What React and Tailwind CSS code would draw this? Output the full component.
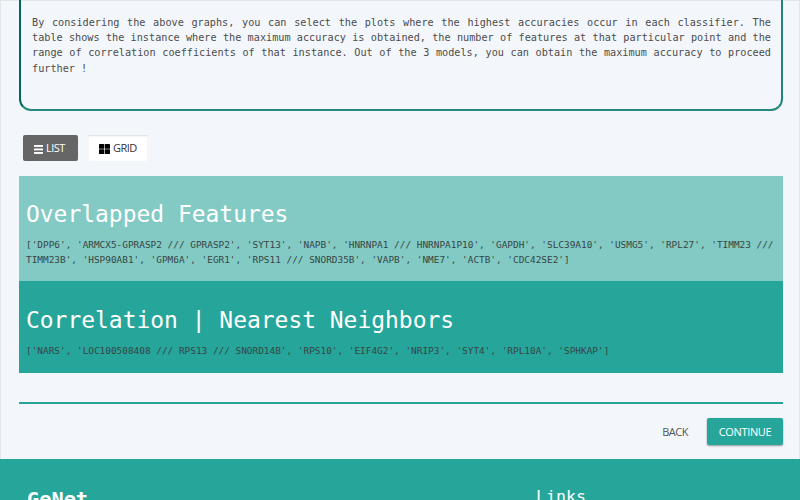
const mono = "font-['DejaVu_Sans_Mono','Liberation_Mono',monospace]";
const sans = "font-['Open_Sans','Noto_Sans',sans-serif]";

function Intro() {
  return (
    <section className="h-[111px] w-[764px] rounded-b-[12px] border-2 border-t-0 border-b-[#26877e] border-l-[#00695c] border-r-[#1f857b] pt-[14.5px] pl-[11px] pr-[10px] text-[10.2px] leading-[15.35px] text-[#4c4c4c]">
      <p className="w-[739px]">
        <span className="block [text-align-last:justify]">
          By considering the above graphs, you can select the plots where the highest accuracies occur in each classifier. The
        </span>
        <span className="block [text-align-last:justify]">
          table shows the instance where the maximum accuracy is obtained, the number of features at that particular point and the
        </span>
        <span className="block [text-align-last:justify]">
          range of correlation coefficients of that instance. Out of the 3 models, you can obtain the maximum accuracy to proceed
        </span>
        <span className="block">further !</span>
      </p>
    </section>
  );
}

function ViewToggle() {
  return (
    <div className={`${sans} mt-[24px] ml-[4px] flex h-[26px] gap-[10px] text-[11px] tracking-[-0.5px]`}>
      <button className="flex w-[55px] items-center rounded-[2px] bg-[#666] pl-[11px] pt-[1px] text-white">
        <svg className="mr-[3px] mt-[1px] h-[9px] w-[9px] shrink-0" viewBox="0 0 9 9" fill="currentColor">
          <rect y="0" width="9" height="1.9" />
          <rect y="3.5" width="9" height="1.9" />
          <rect y="7" width="9" height="1.9" />
        </svg>
        LIST
      </button>
      <button className="flex w-[60px] items-center bg-white pl-[11px] pt-[1px] text-[#333] shadow-[inset_0_1px_2px_#ddd]">
        <svg className="mr-[3px] h-[10px] w-[11px] shrink-0" viewBox="0 0 11 10" fill="#000">
          <rect width="5.2" height="4.7" rx="0.5" />
          <rect x="5.8" width="5.2" height="4.7" rx="0.5" />
          <rect y="5.3" width="5.2" height="4.7" rx="0.5" />
          <rect x="5.8" y="5.3" width="5.2" height="4.7" rx="0.5" />
        </svg>
        GRID
      </button>
    </div>
  );
}

function FeatureList({ title, lines, className }) {
  return (
    <section className={`pl-[7px] text-[#364545] ${className}`}>
      <h2 className="text-[22.95px] leading-[28px] text-white">{title}</h2>
      <div className="mt-[9px] text-[9.42px] leading-[15px]">
        {lines.map((line) => (
          <p key={line} className="whitespace-nowrap">{line}</p>
        ))}
      </div>
    </section>
  );
}

export default function App() {
  return (
    <div className={`${mono} flex h-[500px] w-[800px] flex-col overflow-hidden bg-[#f3f7fb] shadow-[inset_0_0_0_1px_#e3e6e9]`}>
      <main className="h-[459px] shrink-0 pl-[19px]">
        <Intro />
        <ViewToggle />
        <div className="mt-[15px] w-[764px]">
          <FeatureList
            title="Overlapped Features"
            className="h-[105px] bg-[#82cac3] pt-[24px]"
            lines={[
              "['DPP6', 'ARMCX5-GPRASP2 /// GPRASP2', 'SYT13', 'NAPB', 'HNRNPA1 /// HNRNPA1P10', 'GAPDH', 'SLC39A10', 'USMG5', 'RPL27', 'TIMM23 ///",
              "TIMM23B', 'HSP90AB1', 'GPM6A', 'EGR1', 'RPS11 /// SNORD35B', 'VAPB', 'NME7', 'ACTB', 'CDC42SE2']",
            ]}
          />
          <FeatureList
            title="Correlation | Nearest Neighbors"
            className="h-[92px] bg-[#26a69a] pt-[25px]"
            lines={[
              "['NARS', 'LOC100508408 /// RPS13 /// SNORD14B', 'RPS10', 'EIF4G2', 'NRIP3', 'SYT4', 'RPL10A', 'SPHKAP']",
            ]}
          />
        </div>
        <hr className="mt-[29px] w-[764px] border-0 border-t-2 border-[#26a69a]" />
        <div className={`${sans} mt-[14px] flex h-[27px] w-[764px] items-center justify-end text-[11px] tracking-[-0.5px]`}>
          <button className="mr-[19px] pt-[1px] text-[#555]">BACK</button>
          <button className="h-[27px] w-[76px] rounded-[2px] bg-[#26a69a] pt-[1px] tracking-[-0.35px] text-white shadow-[0_1px_2px_rgba(0,0,0,0.4)]">CONTINUE</button>
        </div>
      </main>
      <footer className="flex h-[41px] shrink-0 overflow-hidden bg-[#26a69a] text-white">
        <h3 className="w-[510px] pl-[27px] pt-[26px] text-[20.3px] leading-[28px] font-bold">GeNet</h3>
        <h4 className="pl-[26px] pt-[25px] text-[16.6px] leading-[26px]">Links</h4>
      </footer>
    </div>
  );
}
